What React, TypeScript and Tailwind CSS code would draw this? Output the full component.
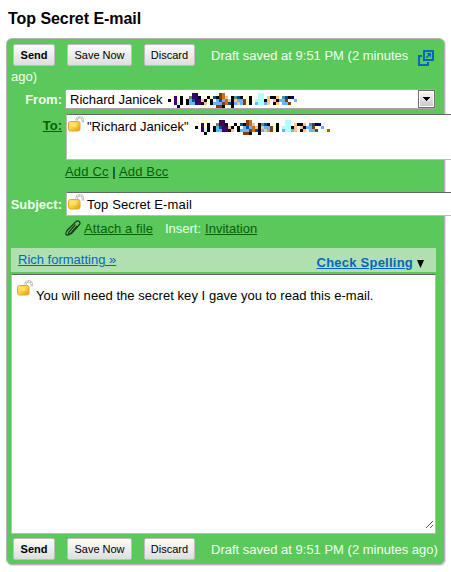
import React from 'react';

const COLORS: Record<string, string> = {
  k: '#000000', y: '#ffffc8', p: '#3a0066', b: '#66b5ff', n: '#000080', o: '#808040',
  t: '#ffc486', r: '#8b3a00', c: '#b2ffff', g: '#c87020', d: '#005090', s: '#5c8c90',
};

const ADDRESS = [
  '..yy....pp.......rg...........cc............',
  '.yp.k..oppk..kydkrgt.ksdk.yk..cc.tkkt.sdkn..',
  'k.pyk.kbdpptk.k.bdbgtktbbrykyccckt.tkbbr.yb.',
  '..pck.kbbppkt.kbbbrgdkbtbryk.bccbt.kt.bbr..y',
  '...k............rrk..k......................'
];

function Mosaic({ tail = false }: { tail?: boolean }) {
  return (
    <svg width="138" height="15" viewBox="0 0 138 15" shapeRendering="crispEdges" className="shrink-0">
      {ADDRESS.flatMap((row, y) =>
        [...row].map((c, x) => c === '.' ? null : <rect key={`${x}-${y}`} x={x * 3} y={y * 3} width="3" height="3" fill={COLORS[c]} />)
      )}
      {tail && <rect x="132" y="9" width="3" height="3" fill="#b86000" />}
    </svg>
  );
}

function Lock() {
  return (
    <svg width="16" height="16" viewBox="0 0 16 16" className="shrink-0">
      <defs>
        <linearGradient id="gold" x1="0" y1="0" x2="1" y2="1">
          <stop stopColor="#ffe680" /><stop offset=".5" stopColor="#fbd03c" /><stop offset="1" stopColor="#e09a18" />
        </linearGradient>
      </defs>
      <path d="M8.6 5.5V4.2Q8.6 1.3 11.7 1.3T14.8 4.2V6.5" fill="none" stroke="#b4b4b4" strokeWidth="2.2" />
      <path d="M8.6 5.5V4.2Q8.6 1.3 11.7 1.3T14.8 4.2V6.5" fill="none" stroke="#f2f2f2" strokeWidth="1.2" strokeDasharray="2 1" />
      <rect x=".5" y="5.5" width="11.5" height="9.5" rx="2" fill="url(#gold)" stroke="#e3aa28" />
      <rect x="2.5" y="7" width="6" height="4" rx="1" fill="#ffe680" opacity=".65" />
    </svg>
  );
}

function Button({ children, className }: { children: React.ReactNode; className: string }) {
  return <button className={`h-[22px] shrink-0 rounded-[2px] border border-[#c2bcc2] bg-linear-to-b from-[#fcfcfc] to-[#dedede] leading-[20px] whitespace-nowrap text-black ${className}`}>{children}</button>;
}

function Buttons() {
  return (
    <>
      <Button className="ml-[5px] w-[42px] text-[11px] font-bold">Send</Button>
      <Button className="ml-[12px] w-[65px] text-[11px]">Save Now</Button>
      <Button className="ml-[12px] w-[51px] text-[11px]">Discard</Button>
    </>
  );
}

export default function App() {
  return (
    <div className="h-[572px] w-[451px] overflow-hidden bg-white font-['Liberation_Sans',Arial,sans-serif] text-[13px] leading-[16px] text-black">
      <h1 className="h-[38px] pt-[9px] pl-[8px] text-[16px] leading-[20px] font-bold tracking-[-0.05px] whitespace-nowrap">Top Secret E-mail</h1>
      <main className="ml-[6px] h-[527px] w-[439px] rounded-[6px] border border-[#b9b4b9] bg-[#5bc85b] pt-px pl-px shadow-[1px_1px_0_#dedbde]">
        <div className="flex h-[29px] pt-[4px] whitespace-nowrap">
          <Buttons />
          <span className="ml-[16px] w-[197px] shrink-0 pt-[4px] text-[#f0fff0]">Draft saved at 9:51 PM (2 minutes</span>
          <svg className="mt-[6px] ml-[10px] shrink-0" width="16" height="16" viewBox="0 0 16 16" fill="none" stroke="#0764c8" strokeWidth="2">
            <path d="M6 1h9v9H6zM4 6H1v9h9v-3" /><path d="m8.3 7.7 3-3" strokeWidth="1.6" /><path d="M8.5 3H13v4.5z" fill="#0764c8" stroke="none" />
          </svg>
        </div>
        <div className="h-[20px] pl-[3px] text-[#f0fff0]">ago)</div>
        <div className="flex h-[20px]">
          <b className="w-[54px] shrink-0 pt-[3px] text-right text-[#f0fff0]">From:</b>
          <div className="ml-[3px] flex h-[20px] w-[371px] shrink-0 border border-[#aaa5aa] bg-white pl-[4px]">
            <span className="w-[98px] shrink-0 pt-[2px]">Richard Janicek</span>
            <div className="mt-[3px]"><Mosaic /></div>
            <div className="ml-auto flex h-[18px] w-[17px] items-center justify-center border border-[#707070] bg-linear-to-b from-[#fafafa] to-[#c8c8c8] outline-1 -outline-offset-2 outline-white">
              <svg width="7" height="4" viewBox="0 0 7 4"><path d="M0 0h7v1H6v1H5v1H4v1H3V3H2V2H1V1H0z" /></svg>
            </div>
          </div>
        </div>
        <div className="mt-[5px] flex h-[46px]">
          <b className="w-[54px] shrink-0 pt-[4px] text-right text-[#075f07] underline">To:</b>
          <div className="ml-[4px] flex h-[46px] w-[400px] shrink-0 border border-t-[#666] border-r-[#bbb] border-b-[#bbb] border-l-[#bbb] bg-white pl-px">
            <div className="pt-[1px]"><Lock /></div>
            <span className="ml-[3px] w-[108px] shrink-0 pt-[4px] whitespace-nowrap">"Richard Janicek"</span>
            <div className="mt-[5px]"><Mosaic tail /></div>
          </div>
        </div>
        <div className="h-[32px] pt-[4px] pl-[57px] tracking-[0.16px]"><a className="text-[#075f07] underline">Add Cc</a> | <a className="text-[#075f07] underline">Add Bcc</a></div>
        <div className="flex h-[24px]">
          <b className="w-[54px] shrink-0 pt-[5px] text-right text-[#f0fff0]">Subject:</b>
          <div className="ml-[4px] flex h-[24px] w-[400px] shrink-0 border border-t-[#666] border-r-[#bbb] border-b-[#bbb] border-l-[#bbb] bg-white pt-px pl-px">
            <Lock /><span className="ml-[3px] pt-[3px] tracking-[0.14px]">Top Secret E-mail</span>
          </div>
        </div>
        <div className="flex h-[32px] pt-[5px] pl-[57px] whitespace-nowrap">
          <svg className="-mt-px" width="16" height="16" viewBox="0 0 16 16" fill="none" stroke="#173417" strokeWidth="1.2" strokeLinecap="round"><path d="m10 5-6 7q-1 2 .5 2t2.5-1l7-8q2-2 .2-3.5t-3.5.3L3 9.5Q-.2 13 1.2 14.5t4-.5l6.5-7.5" /></svg>
          <a className="ml-[3px] tracking-[0.08px] text-[#075f07] underline">Attach a file</a>
          <span className="ml-[12px] text-[#f0fff0]">Insert:</span>
          <a className="ml-[4px] text-[#075f07] underline">Invitation</a>
        </div>
        <div className="ml-[3px] flex h-[24px] w-[425px] justify-between bg-[#b0dfb0] pr-[12px] pl-[7px] text-[#0764c8]">
          <a className="pt-[4px] underline">Rich formatting »</a>
          <span className="flex pt-[7px]"><b className="tracking-[0.23px] underline">Check Spelling</b><svg className="mt-[5px] ml-[4px]" width="7" height="8" viewBox="0 0 7 8"><path d="M0 0h7L3.5 8z" fill="#000" /></svg></span>
        </div>
        <div className="mt-[2px] ml-[3px] flex h-[260px] w-[425px] border border-t-[#666] border-r-[#bbb] border-b-[#bbb] border-l-[#bbb] bg-white pl-[5px]">
          <div className="pt-[5px]"><Lock /></div>
          <span className="ml-[3px] w-[380px] shrink-0 pt-[13px] tracking-[0.045px]">You will need the secret key I gave you to read this e-mail.</span>
          <svg className="mt-auto mr-[1px] mb-[4px] ml-auto shrink-0" width="9" height="9" viewBox="0 0 9 9" stroke="#555" shapeRendering="crispEdges"><path d="m1 8 7-7M5 8l3-3" /></svg>
        </div>
        <div className="flex pt-[4px] whitespace-nowrap"><Buttons /><span className="ml-[16px] pt-[4px] text-[#f0fff0]">Draft saved at 9:51 PM (2 minutes ago)</span></div>
      </main>
    </div>
  );
}
